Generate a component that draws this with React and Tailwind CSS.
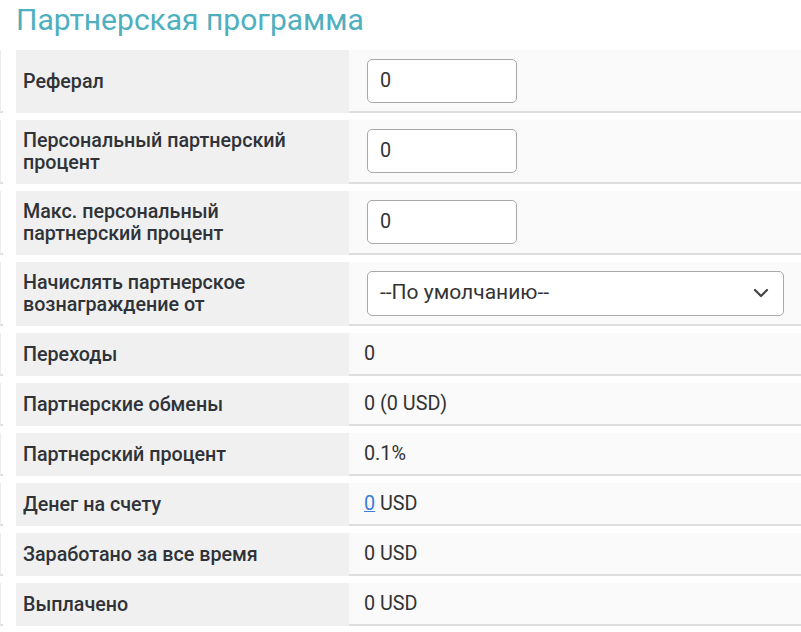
import React from "react";

const font = { fontFamily: "Roboto, 'Noto Sans', sans-serif" };

function Row({ h, label, children }) {
  return (
    <div className="flex" style={{ height: h }}>
      <div className="w-[3px] shrink-0 bg-white border-l border-[#ececec] border-b-2 border-b-[#dedede]" />
      <div className="w-[13px] shrink-0" />
      <div className="w-[333px] shrink-0 bg-[#f0f0f0] flex items-center pl-[7px] pr-3 text-[19.7px] leading-[22px] font-medium text-[#2f3338]">
        <span className="whitespace-pre-line">{label}</span>
      </div>
      <div className="flex-1 bg-[#fafafa] border-b-2 border-[#dedede] flex items-center pl-[15px] text-[19.8px] text-[#333]">
        {children}
      </div>
    </div>
  );
}

function Input() {
  return (
    <div className="ml-[3px] w-[150px] h-[44px] border border-[#a8a8a8] rounded-[5px] bg-white flex items-center pl-[12px] text-[19.8px] text-[#333]">
      0
    </div>
  );
}

function Select() {
  return (
    <div className="ml-[3px] w-[417px] h-[45px] border border-[#a8a8a8] rounded-[5px] bg-white flex items-center justify-between pl-[12px] pr-[14px] text-[21px] text-[#333]">
      <span>--По умолчанию--</span>
      <svg width="16" height="10" viewBox="0 0 16 10" fill="none">
        <polyline points="2,2 8,8 14,2" stroke="#444" strokeWidth="2.2" strokeLinecap="round" strokeLinejoin="round" />
      </svg>
    </div>
  );
}

export default function App() {
  return (
    <div className="w-[801px] h-[632px] bg-white overflow-hidden" style={font}>
      <div className="h-[50px] pl-[16px] pt-[1px] text-[30px] leading-[38px] text-[#4eafbf]">
        Партнерская программа
      </div>
      <div className="flex flex-col gap-[7px]">
        <Row h={63} label="Реферал"><Input /></Row>
        <Row h={64} label={"Персональный партнерский\nпроцент"}><Input /></Row>
        <Row h={64} label={"Макс. персональный\nпартнерский процент"}><Input /></Row>
        <Row h={64} label={"Начислять партнерское\nвознаграждение от"}><Select /></Row>
        <Row h={43} label="Переходы">0</Row>
        <Row h={43} label="Партнерские обмены">0 (0 USD)</Row>
        <Row h={43} label="Партнерский процент">0.1%</Row>
        <Row h={43} label="Денег на счету">
          <span>
            <a className="text-[#3b7dd8] underline">0</a> USD
          </span>
        </Row>
        <Row h={43} label="Заработано за все время">0 USD</Row>
        <Row h={43} label="Выплачено">0 USD</Row>
      </div>
    </div>
  );
}
